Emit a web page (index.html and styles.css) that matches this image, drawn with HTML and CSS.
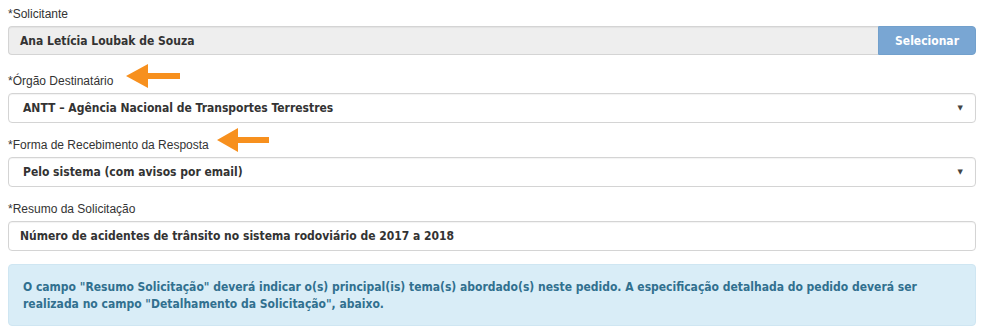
FILE: index.html
```html
<!DOCTYPE html>
<html lang="pt-BR">
<head>
<meta charset="utf-8">
<title>Solicitação</title>
<link rel="stylesheet" href="styles.css">
</head>
<body>
<form class="form">
  <div class="group group-first">
    <label class="label">*Solicitante</label>
    <div class="input-group">
      <div class="control control-readonly">Ana Letícia Loubak de Souza</div>
      <button type="button" class="btn">Selecionar</button>
    </div>
  </div>

  <div class="group">
    <label class="label">*Órgão Destinatário</label>
    <svg class="arrow arrow-1" width="54" height="24" viewBox="0 0 54 24"><polygon points="0,12 22,0 22,9 54,9 54,15 22,15 22,24" fill="#f7901e"/></svg>
    <div class="control select">
      <span>ANTT – Agência Nacional de Transportes Terrestres</span>
      <span class="caret">▼</span>
    </div>
  </div>

  <div class="group">
    <label class="label">*Forma de Recebimento da Resposta</label>
    <svg class="arrow arrow-2" width="52" height="24" viewBox="0 0 52 24"><polygon points="0,12 21,0 21,9 52,9 52,15 21,15 21,24" fill="#f7901e"/></svg>
    <div class="control select">
      <span>Pelo sistema (com avisos por email)</span>
      <span class="caret">▼</span>
    </div>
  </div>

  <div class="group">
    <label class="label">*Resumo da Solicitação</label>
    <div class="control">Número de acidentes de trânsito no sistema rodoviário de 2017 a 2018</div>
  </div>

  <div class="alert">O campo "Resumo Solicitação" deverá indicar o(s) principal(is) tema(s) abordado(s) neste pedido. A especificação detalhada do pedido deverá ser realizada no campo "Detalhamento da Solicitação", abaixo.</div>
</form>
</body>
</html>
```

FILE: styles.css
```css
html, body {
  margin: 0;
  padding: 0;
  background: #fff;
}

body {
  width: 984px;
  height: 336px;
  overflow: hidden;
}

.form {
  padding: 6px 8px 0 8px;
  display: flex;
  flex-direction: column;
}

.group {
  position: relative;
  display: flex;
  flex-direction: column;
  margin-bottom: 14px;
}

.group-first {
  margin-bottom: 18px;
}

.label {
  display: block;
  font-family: "Liberation Sans", Arial, sans-serif;
  font-size: 12px;
  line-height: 16px;
  color: #333;
  margin-bottom: 4px;
}

.input-group {
  display: flex;
}

.control {
  box-sizing: border-box;
  height: 30px;
  border: 1px solid #d4d4d4;
  border-radius: 4px;
  box-shadow: inset 0 1px 1px rgba(0, 0, 0, 0.05);
  background: #fff;
  padding: 0 11px;
  display: flex;
  align-items: center;
  font-family: "DejaVu Sans Condensed", "DejaVu Sans", sans-serif;
  font-weight: bold;
  font-size: 12px;
  color: #333;
}

.control-readonly {
  flex: 1;
  height: 29px;
  background: #eeeeee;
  border-radius: 4px 0 0 4px;
  border-right: none;
}

.btn {
  box-sizing: border-box;
  width: 98px;
  height: 29px;
  border: 1px solid #72a0cc;
  border-radius: 0 4px 4px 0;
  background: #79a6d3;
  color: #fff;
  font-family: "DejaVu Sans Condensed", "DejaVu Sans", sans-serif;
  font-weight: bold;
  font-size: 12px;
  padding: 0;
  margin: 0;
}

.select {
  justify-content: space-between;
  padding-left: 14px;
  padding-right: 12px;
}

.caret {
  font-family: "DejaVu Sans", sans-serif;
  font-size: 7px;
  color: #444;
  font-weight: normal;
}

.arrow {
  position: absolute;
  display: block;
}

.arrow-1 {
  left: 118px;
  top: -9px;
}

.arrow-2 {
  left: 209px;
  top: -9px;
}

.alert {
  margin-top: -1px;
  box-sizing: border-box;
  height: 62px;
  background: #d9edf7;
  border: 1px solid #cfe6f2;
  border-radius: 4px;
  color: #31708f;
  font-family: "DejaVu Sans Condensed", "DejaVu Sans", sans-serif;
  font-weight: bold;
  font-size: 12px;
  line-height: 17px;
  padding: 14px 14px 0 14px;
}
```
